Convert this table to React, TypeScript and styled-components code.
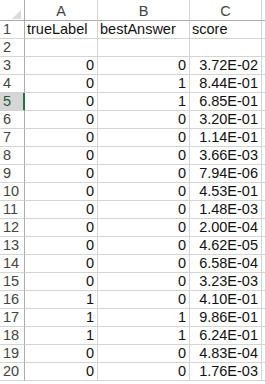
import { Fragment } from "react";
import styled, { createGlobalStyle } from "styled-components";

const Global = createGlobalStyle`
body {
    margin: 0;
    background: #fff;
    font-family: "Liberation Sans", Arial, sans-serif;
}
`

const Sheet = styled.div`
display: grid;
grid-template-columns: 25px 73px 92px 72px 1fr;
grid-template-rows: 21px;
grid-auto-rows: 18px;
width: 265px;
height: 384px;
overflow: hidden;
font-size: 14.5px;
`

const Corner = styled.div`
position: relative;
border-right: 1px solid #ababab;
border-bottom: 1px solid #ababab;
box-sizing: border-box;
`

const Triangle = styled.div`
position: absolute;
right: 3px;
bottom: 1px;
width: 0;
height: 0;
border-left: 9px solid transparent;
border-bottom: 9px solid #dadada;
`

const ColHead = styled.div`
display: flex;
align-items: center;
justify-content: center;
border-right: 1px solid #d4d4d4;
border-bottom: 1px solid #ababab;
box-sizing: border-box;
color: #444;
padding-top: 1px;
`

const RowHead = styled.div<{ $active?: boolean }>`
display: flex;
align-items: flex-end;
padding: 0 0 1px 3px;
box-sizing: border-box;
border-right: 1px solid ${p => p.$active ? "#217346" : "#ababab"};
border-bottom: 1px solid #d4d4d4;
background: ${p => p.$active ? "#d6d6d6" : "#fff"};
box-shadow: ${p => p.$active ? "inset -1px 0 0 #217346" : "none"};
color: ${p => p.$active ? "#1f5c3a" : "#444"};
`

const Cell = styled.div<{ $num?: boolean }>`
display: flex;
align-items: flex-end;
justify-content: ${p => p.$num ? "flex-end" : "flex-start"};
padding: 0 3px 1px 2px;
box-sizing: border-box;
border-right: 1px solid #d4d4d4;
border-bottom: 1px solid #d4d4d4;
color: #111;
white-space: nowrap;
overflow: hidden;
`

type Row = [number, number, string];

const rows: Row[] = [
    [0, 0, "3.72E-02"],
    [0, 1, "8.44E-01"],
    [0, 1, "6.85E-01"],
    [0, 0, "3.20E-01"],
    [0, 0, "1.14E-01"],
    [0, 0, "3.66E-03"],
    [0, 0, "7.94E-06"],
    [0, 0, "4.53E-01"],
    [0, 0, "1.48E-03"],
    [0, 0, "2.00E-04"],
    [0, 0, "4.62E-05"],
    [0, 0, "6.58E-04"],
    [0, 0, "3.23E-03"],
    [1, 0, "4.10E-01"],
    [1, 1, "9.86E-01"],
    [1, 1, "6.24E-01"],
    [0, 0, "4.83E-04"],
    [0, 0, "1.76E-03"],
];

function App() {
    return (
        <>
            <Global />
            <Sheet>
                <Corner><Triangle /></Corner>
                <ColHead>A</ColHead>
                <ColHead>B</ColHead>
                <ColHead>C</ColHead>
                <ColHead></ColHead>

                <RowHead>1</RowHead>
                <Cell>trueLabel</Cell>
                <Cell>bestAnswer</Cell>
                <Cell>score</Cell>
                <Cell />

                <RowHead>2</RowHead>
                <Cell />
                <Cell />
                <Cell />
                <Cell />

                {rows.map((r, i) => (
                    <Fragment key={i}>
                        <RowHead $active={i + 3 === 5}>{i + 3}</RowHead>
                        <Cell $num>{r[0]}</Cell>
                        <Cell $num>{r[1]}</Cell>
                        <Cell $num>{r[2]}</Cell>
                        <Cell />
                    </Fragment>
                ))}
            </Sheet>
        </>
    );
}

export default App;
